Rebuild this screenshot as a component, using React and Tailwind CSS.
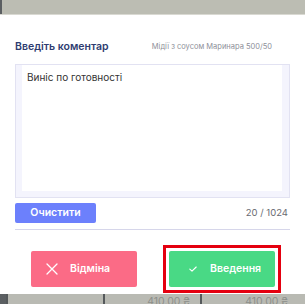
import { useState } from 'react'

function CrossIcon() {
  return (
    <svg viewBox="0 0 12 12" width="12" height="12" aria-hidden="true">
      <path d="M1 1l10 10M11 1L1 11" stroke="#fff" strokeWidth="1.3" strokeLinecap="round" fill="none" />
    </svg>
  )
}

function CheckIcon() {
  return (
    <svg viewBox="0 0 8 6" width="8" height="6" aria-hidden="true">
      <path d="M0.8 3.2l2.2 2L7.2 1" stroke="#fff" strokeWidth="1.1" strokeLinecap="round" strokeLinejoin="round" fill="none" />
    </svg>
  )
}

function PriceCell({ width, price }) {
  return (
    <div className={`flex h-full items-start justify-end border-r-2 border-[#55595b] pr-[10px] ${width}`}>
      {price && (
        <span className="mt-[3px] text-[10.5px] leading-none text-[#8d8f8a]">{price}</span>
      )}
    </div>
  )
}

export default function App() {
  // в строке есть хвостовой пробел, поэтому счётчик показывает 20
  const [text, setText] = useState('Виніс по готовності ')

  return (
    <div className="flex h-[304px] w-[305px] flex-col overflow-hidden bg-white font-['Inter','Roboto',sans-serif]">
      {/* полоса сверху, то что под модалкой */}
      <div className="flex h-[15px] shrink-0 border-b border-[#d9d9d2] bg-[#bcbdb3]">
        <div className="w-[2px] bg-[#5b5f62]" />
      </div>

      <div className="flex flex-col px-[15px] pt-[24px]">
        <div className="flex h-[16px] items-center justify-between">
          <h2 className="text-[10.5px] font-semibold text-[#2e3c70]">Введіть коментар</h2>
          <span className="mr-[18px] text-[7.5px] text-[#8e8f99]">Мідії з соусом Маринара 500/50</span>
        </div>

        <div className="mt-[9px] flex h-[134px] border border-[#e2e2f2] bg-[#f4f4fd] pb-[6px] pl-[6px] pr-[7px]">
          <textarea
            value={text}
            onChange={(e) => setText(e.target.value)}
            className="flex-1 resize-none bg-white pl-[5px] pr-[4px] pt-[5px] text-[10px] leading-[14px] text-[#333] outline-none"
          />
        </div>

        <div className="mt-[5px] flex h-[20px] items-center justify-between">
          <button
            type="button"
            onClick={() => setText('')}
            className="h-full w-[81px] rounded-[2px] bg-[#6c80fc] text-[10.5px] font-semibold text-white"
          >
            Очистити
          </button>
          <span className="pr-[2px] text-[9.5px] text-[#6a6b72]">{text.length} / 1024</span>
        </div>

        <div className="mt-[6px] h-px bg-[#d6d6ea]" />

        <div className="mt-[21px] flex gap-[32px] pl-[16px]">
          <button
            type="button"
            className="flex h-[36px] w-[106px] items-center gap-[12px] rounded-[2px] bg-[#fb6b86] pl-[15px] text-[10.5px] font-semibold text-white"
          >
            <CrossIcon />
            Відміна
          </button>
          <div className="relative">
            <button
              type="button"
              className="flex h-[36px] w-[106px] items-center gap-[13px] rounded-[2px] bg-[#49d985] pl-[20px] text-[10.5px] font-semibold text-white"
            >
              <CheckIcon />
              Введення
            </button>
            {/* выделение на скриншоте */}
            <div className="pointer-events-none absolute -inset-[6px] border-[3px] border-[#e4000f]" />
          </div>
        </div>
      </div>

      <div className="mt-auto flex h-[10px] shrink-0 overflow-hidden bg-[#b9bab3]">
        <div className="w-[8px] border-r-2 border-[#55595b] bg-[#5b5f62]" />
        <PriceCell width="w-[97px]" />
        <PriceCell width="w-[97px]" price="410.00 ₴" />
        <div className="flex flex-1 items-start justify-end pr-[17px]">
          <span className="mt-[3px] text-[10.5px] leading-none text-[#8d8f8a]">410.00 ₴</span>
        </div>
      </div>
    </div>
  )
}
